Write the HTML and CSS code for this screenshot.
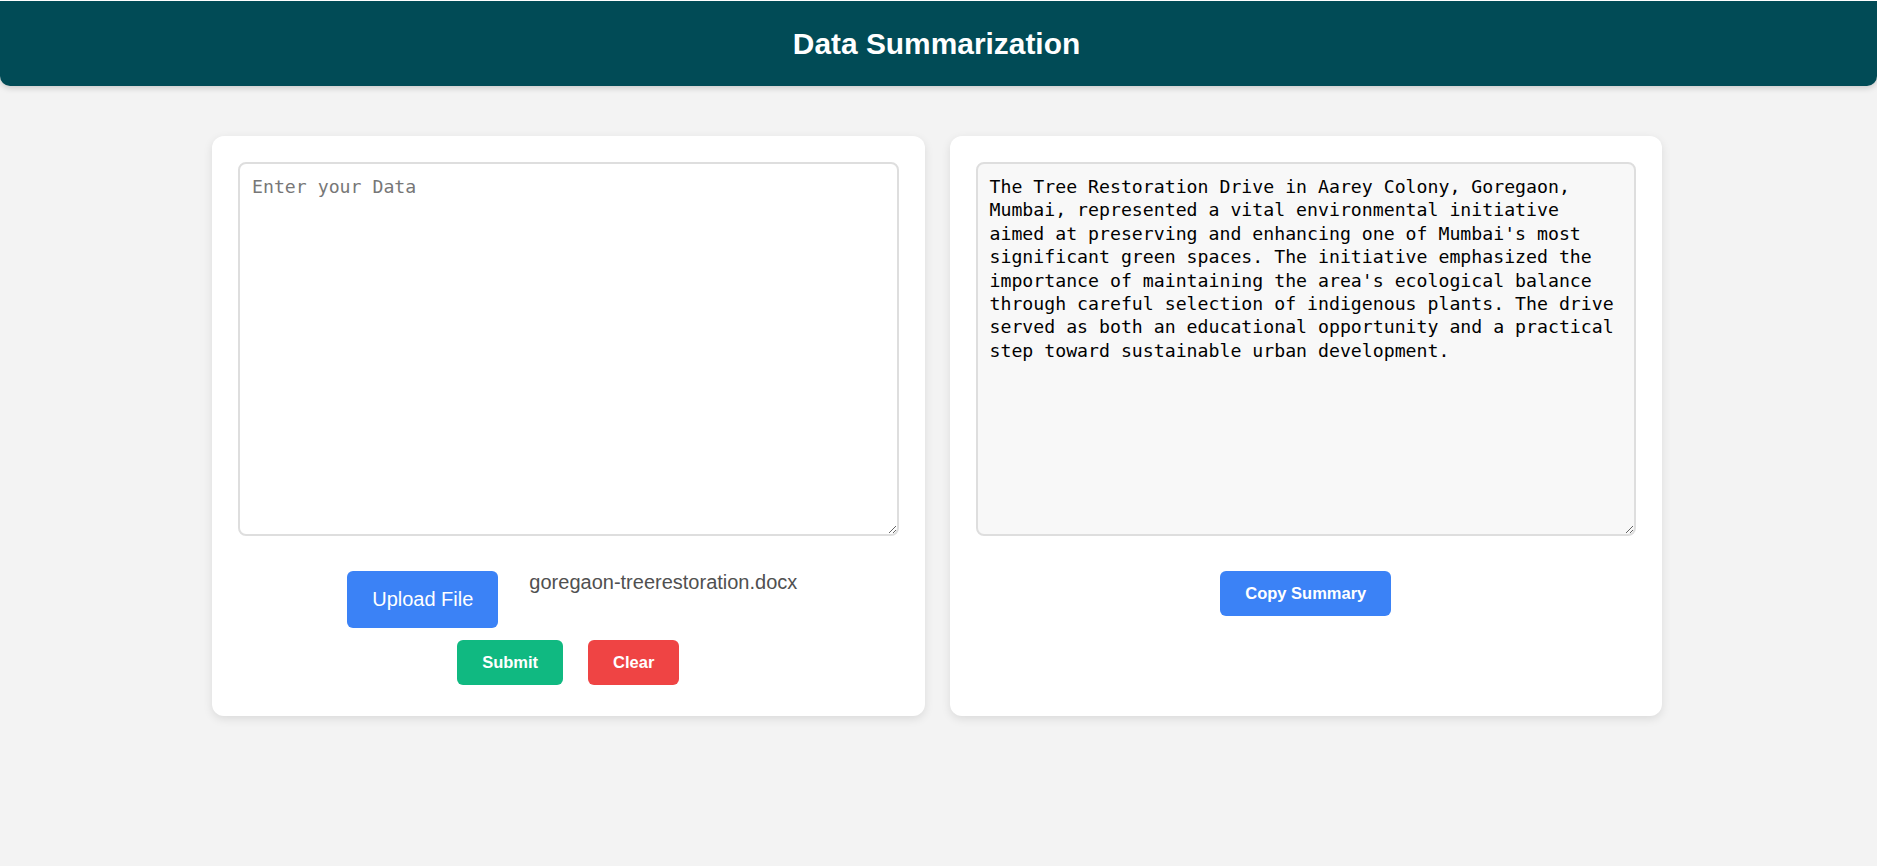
FILE: index.html
```html
<!DOCTYPE html>
<html lang="en">
<head>
<meta charset="utf-8">
<title>Data Summarization</title>
<link rel="stylesheet" href="styles.css">
</head>
<body>
<header class="app-header">
  <h1 class="app-title">Data Summarization</h1>
</header>
<main class="workspace">
  <section class="card">
    <textarea class="data-box" placeholder="Enter your Data"></textarea>
    <div class="upload-row">
      <label class="btn btn-upload">Upload File<input class="file-input" type="file"></label>
      <span class="file-name">goregaon-treerestoration.docx</span>
    </div>
    <div class="action-row">
      <button class="btn btn-action btn-submit">Submit</button>
      <button class="btn btn-action btn-clear">Clear</button>
    </div>
  </section>
  <section class="card">
    <textarea class="data-box data-box--summary" readonly>The Tree Restoration Drive in Aarey Colony, Goregaon, Mumbai, represented a vital environmental initiative aimed at preserving and enhancing one of Mumbai's most significant green spaces. The initiative emphasized the importance of maintaining the area's ecological balance through careful selection of indigenous plants. The drive served as both an educational opportunity and a practical step toward sustainable urban development.</textarea>
    <div class="copy-row">
      <button class="btn btn-action btn-copy">Copy Summary</button>
    </div>
  </section>
</main>
</body>
</html>
```

FILE: styles.css
```css
html, body {
  margin: 0;
  padding: 0;
}

body {
  background: #f3f3f3;
  font-family: "Liberation Sans", Arial, sans-serif;
  min-height: 866px;
}

.app-header {
  background: #014b56;
  border-top: 1px solid #ffffff;
  height: 85px;
  border-radius: 0 0 10px 10px;
  box-shadow: 0 2px 6px rgba(0, 0, 0, 0.18);
  display: flex;
  align-items: center;
  justify-content: center;
}

.app-title {
  margin: 0 4px 0 0;
  color: #ffffff;
  font-size: 29.9px;
  font-weight: bold;
  line-height: 34px;
}

.workspace {
  width: 1450px;
  margin: 50px 0 0 calc(50% - 726.5px);
  display: flex;
  gap: 25px;
  align-items: stretch;
}

.card {
  flex: 1 1 0;
  background: #ffffff;
  border-radius: 12px;
  padding: 26px 26px 31px;
  box-shadow: 0 3px 10px rgba(0, 0, 0, 0.1);
}

.data-box {
  display: block;
  box-sizing: border-box;
  width: 100%;
  height: 374px;
  margin: 0;
  border: 2px solid #dedede;
  border-radius: 8px;
  padding: 11px 12px;
  background: #ffffff;
  color: #000000;
  font-family: "DejaVu Sans Mono", "Liberation Mono", monospace;
  font-size: 18.2px;
  line-height: 23.4px;
  outline: none;
}

.data-box::placeholder {
  color: #777777;
}

.data-box--summary {
  background: #f8f8f8;
}

.upload-row {
  margin-top: 35px;
  padding-left: 8px;
  display: flex;
  justify-content: center;
  align-items: flex-start;
  gap: 31px;
}

.btn {
  border: none;
  color: #ffffff;
  font-family: "Liberation Sans", Arial, sans-serif;
  cursor: pointer;
  border-radius: 6px;
}

.btn-upload {
  display: inline-block;
  background: #3b82f6;
  font-size: 20px;
  line-height: 23px;
  padding: 17px 25px;
}

.file-input {
  display: none;
}

.file-name {
  font-size: 20px;
  line-height: 23px;
  color: #505050;
}

.action-row {
  margin-top: 12px;
  display: flex;
  justify-content: center;
  gap: 25px;
}

.copy-row {
  margin-top: 35px;
  display: flex;
  justify-content: center;
}

.btn-action {
  font-size: 16.5px;
  font-weight: bold;
  line-height: 19px;
  padding: 13px 25px;
}

.btn-submit {
  background: #10b981;
}

.btn-clear {
  background: #ef4444;
}

.btn-copy {
  background: #3b82f6;
}
```
